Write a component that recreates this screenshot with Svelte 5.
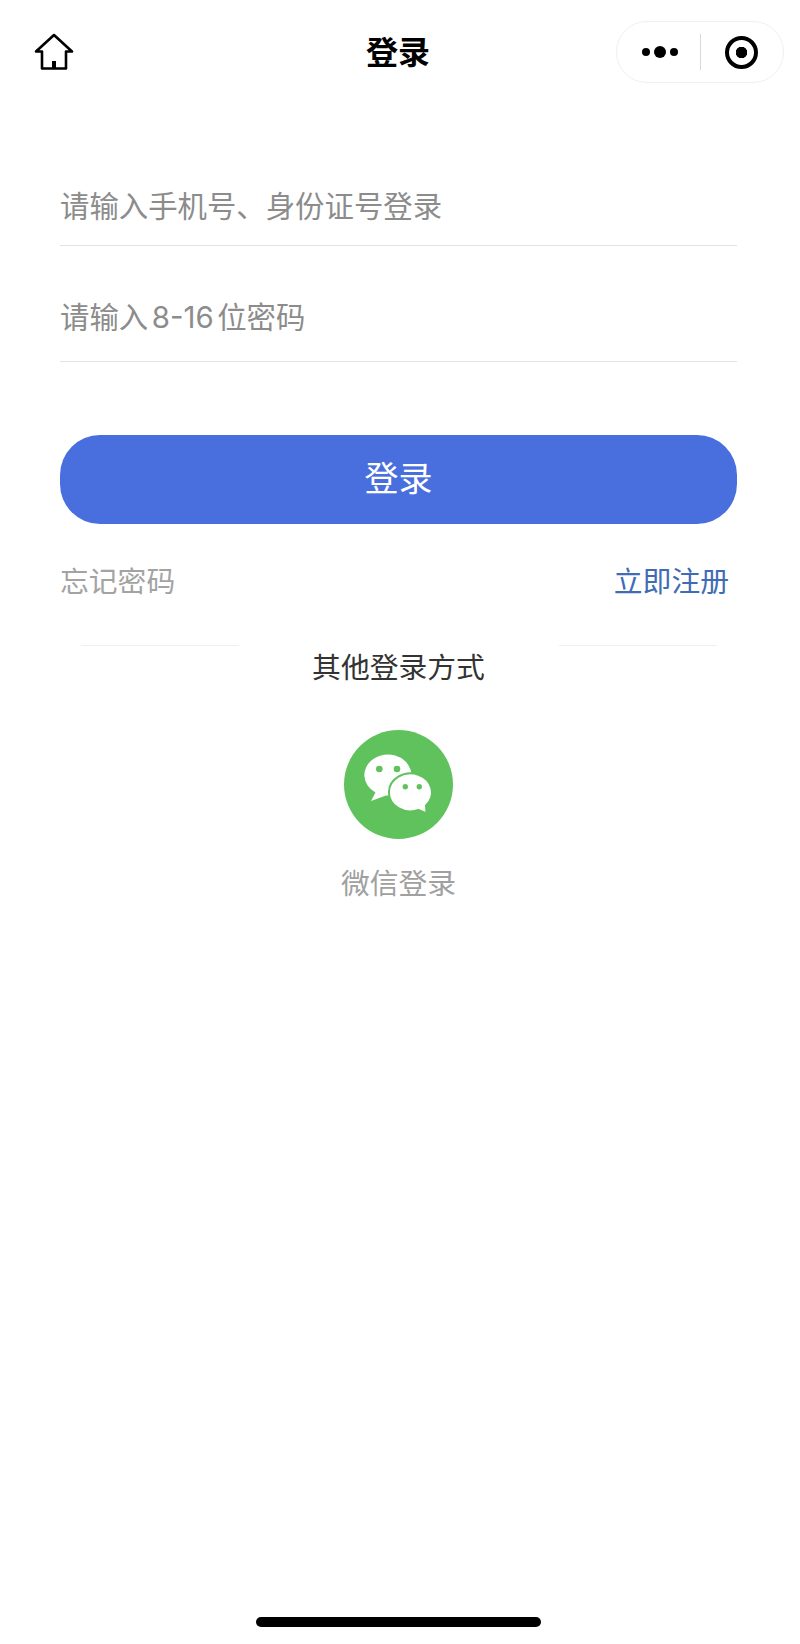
<script>
  let phone = $state('');
  let password = $state('');
</script>

<div class="page">
  <header class="nav">
    <button class="home" aria-label="首页">
      <svg width="40" height="38" viewBox="0 0 40 38" fill="none" stroke="#000" stroke-width="2.6" stroke-linejoin="round" stroke-linecap="round">
        <path d="M2 18.5 L20 2 L38 18.5 L32 18.5 L32 35.5 L8 35.5 L8 18.5 Z" />
        <rect x="18" y="28" width="4" height="7.5" fill="#000" stroke="none" />
      </svg>
    </button>
    <h1>登录</h1>
    <div class="capsule">
      <div class="dots">
        <span class="dot"></span>
        <span class="dot big"></span>
        <span class="dot"></span>
      </div>
      <span class="sep"></span>
      <div class="target"><span></span></div>
    </div>
  </header>

  <main class="form">
    <label class="field first">
      <input type="text" placeholder="请输入手机号、身份证号登录" bind:value={phone} />
    </label>
    <label class="field second">
      <input type="password" placeholder="请输入 8-16 位密码" bind:value={password} />
    </label>

    <button class="submit">登录</button>

    <div class="links">
      <span class="forgot">忘记密码</span>
      <span class="register">立即注册</span>
    </div>
  </main>

  <section class="other">
    <div class="rules">
      <span></span>
      <span></span>
    </div>
    <p class="other-title">其他登录方式</p>
    <svg class="wechat" width="109" height="109" viewBox="0 0 109 109">
      <circle cx="54.5" cy="54.5" r="54.5" fill="#5fc25c" />
      <path d="M27 71 L31.5 62.5 A23.5 20.5 0 1 1 42 65.5 Z" fill="#fff" />
      <circle cx="35.3" cy="39" r="3.3" fill="#5fc25c" />
      <circle cx="53" cy="39" r="3.3" fill="#5fc25c" />
      <path d="M82.5 83.5 L82 75.5 A21.5 19 0 1 0 74.5 80 Z" fill="#fff" stroke="#5fc25c" stroke-width="2" stroke-linejoin="round" />
      <circle cx="61.3" cy="56.7" r="2.7" fill="#5fc25c" />
      <circle cx="75.3" cy="56.7" r="2.7" fill="#5fc25c" />
    </svg>
    <p class="wechat-label">微信登录</p>
  </section>

  <div class="home-bar"></div>
</div>

<style>
  :global(body) {
    margin: 0;
    background: #fff;
  }

  .page {
    width: 800px;
    height: 1644px;
    display: flex;
    flex-direction: column;
    font-family: "Noto Sans CJK SC", "Liberation Sans", sans-serif;
    overflow: hidden;
  }

  .nav {
    display: grid;
    grid-template-columns: 1fr auto 1fr;
    align-items: center;
    height: 60px;
    padding: 21px 16px 1px;
  }

  .home {
    display: flex;
    justify-self: start;
    margin-left: 18px;
    padding: 0;
    border: 0;
    background: none;
  }

  h1 {
    margin: 0 0 4px;
    font-size: 32px;
    font-weight: 700;
    color: #000;
    transform: translateX(-2px);
  }

  .capsule {
    justify-self: end;
    box-sizing: border-box;
    width: 168px;
    height: 62px;
    display: flex;
    align-items: center;
    border: 1px solid #efefef;
    border-radius: 31px;
  }

  .dots {
    box-sizing: border-box;
    width: 83px;
    padding-left: 3px;
    display: flex;
    align-items: center;
    justify-content: center;
    gap: 4px;
  }

  .dot {
    width: 8px;
    height: 8px;
    border-radius: 50%;
    background: #000;
  }

  .dot.big {
    width: 12px;
    height: 12px;
  }

  .sep {
    width: 1px;
    height: 36px;
    background: #d8d8d8;
  }

  .target {
    flex: 1;
    display: flex;
    justify-content: center;
    padding-right: 2px;
  }

  .target span {
    box-sizing: border-box;
    width: 33px;
    height: 33px;
    border: 4px solid #000;
    border-radius: 50%;
    background: radial-gradient(circle, #000 0 5.5px, #fff 6px);
  }

  .form {
    padding: 0 63px 0 60px;
  }

  .field {
    display: block;
    border-bottom: 1px solid #e2e2e2;
  }

  .field.first {
    margin-top: 70px;
  }

  input {
    display: block;
    box-sizing: border-box;
    width: 100%;
    padding: 0;
    border: 0;
    outline: 0;
    background: none;
    font-family: Inter, "Noto Sans CJK SC", sans-serif;
    font-size: 29.4px;
    word-spacing: -4.7px;
    color: #333;
  }

  .first input {
    height: 93px;
    padding-top: 16px;
  }

  .second input {
    height: 115px;
    padding-top: 28px;
  }

  input::placeholder {
    color: #8c8c8c;
    opacity: 1;
  }

  .submit {
    display: block;
    width: 100%;
    height: 89px;
    margin-top: 73px;
    padding: 0 0 6px;
    border: 0;
    border-radius: 40px;
    background: #496fdf;
    color: #fff;
    font: inherit;
    font-size: 34px;
  }

  .links {
    display: flex;
    justify-content: space-between;
    align-items: center;
    height: 40px;
    margin-top: 35px;
    padding-right: 8px;
    font-size: 28.8px;
  }

  .forgot {
    color: #a3a3a3;
  }

  .register {
    color: #3f6cb5;
  }

  .other {
    display: flex;
    flex-direction: column;
    align-items: center;
    padding-right: 3px;
  }

  .rules {
    box-sizing: border-box;
    width: 100%;
    display: flex;
    justify-content: space-between;
    margin-top: 46px;
    padding: 0 80px 0 81px;
  }

  .rules span {
    width: 158px;
    height: 1px;
    background: #efefef;
  }

  .other-title {
    margin: -1px 0 0;
    font-size: 28.8px;
    line-height: 42px;
    color: #333;
  }

  .wechat {
    margin-top: 43px;
  }

  .wechat-label {
    margin: 22px 0 0;
    font-size: 28.8px;
    line-height: 42px;
    color: #a0a0a0;
  }

  .home-bar {
    width: 285px;
    height: 10px;
    margin: auto 0 17px 256px;
    border-radius: 5px;
    background: #000;
  }
</style>
